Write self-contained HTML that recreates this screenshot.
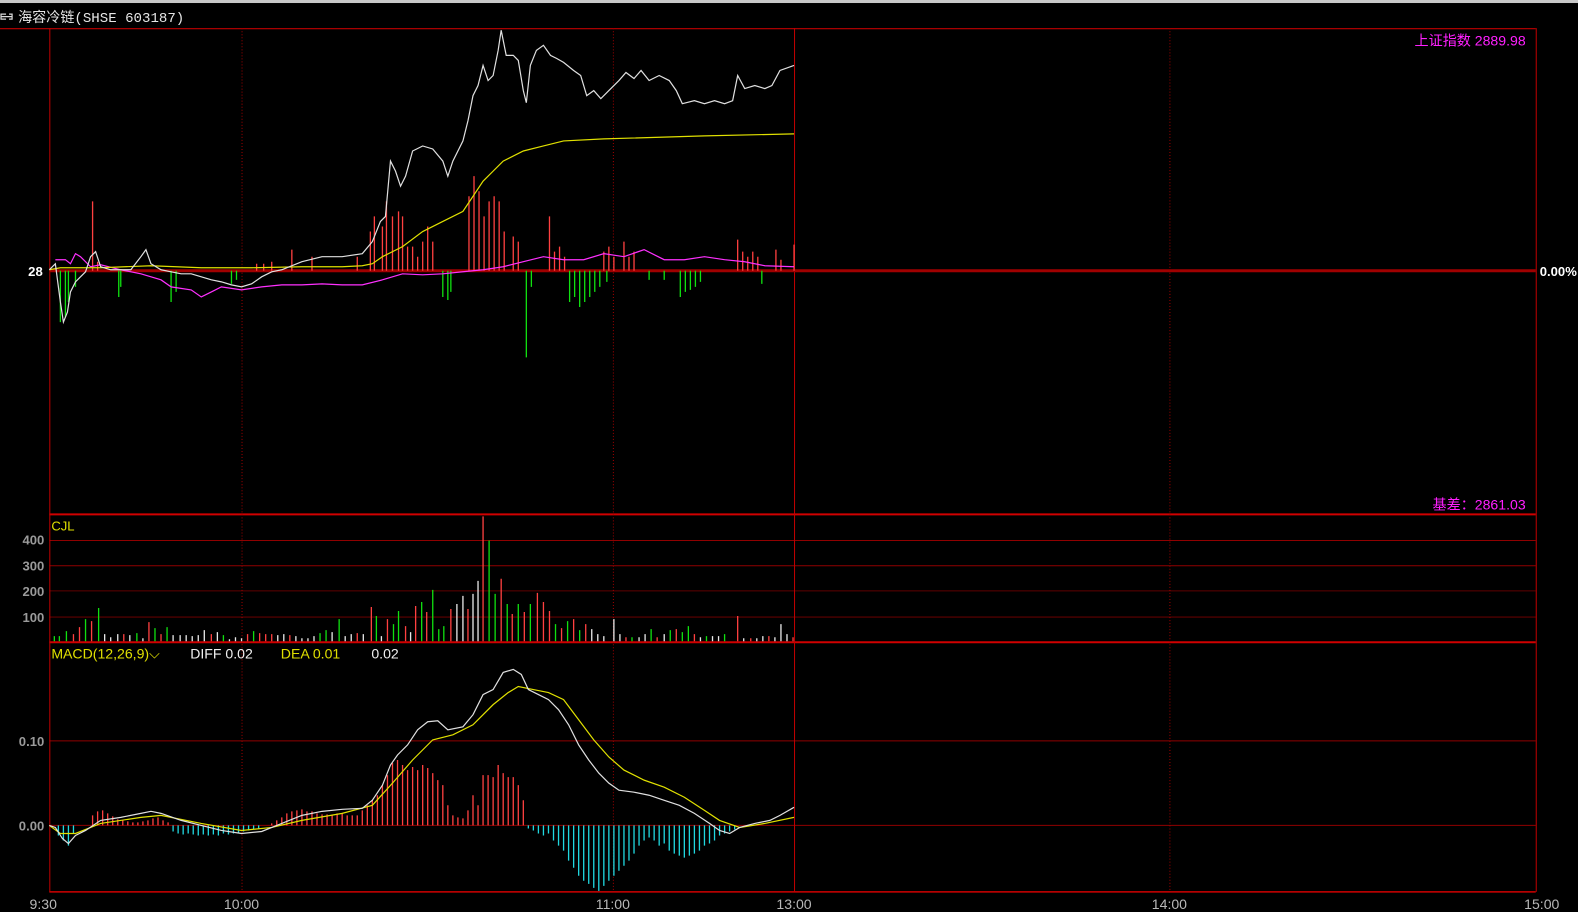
<!DOCTYPE html>
<html><head><meta charset="utf-8"><style>
html,body{margin:0;padding:0;background:#000;overflow:hidden}
svg{display:block}
text{font-family:"Liberation Sans","Noto Sans CJK SC",sans-serif}
</style></head><body>
<svg width="1578" height="912" viewBox="0 0 1568 906" preserveAspectRatio="none" xmlns="http://www.w3.org/2000/svg">
<rect width="1568" height="906" fill="#000"/>
<rect x="0" y="0" width="1568" height="3" fill="#c8c8c8"/>
<g stroke="#ddd" stroke-width="1.2" fill="none"><path d="M6 14H1V19H6M1 16.5H12M9 14H12V19H9"/></g>
<text x="18" y="22" fill="#e6e6e6" font-size="14" style="font-family:'Liberation Mono','Noto Sans CJK SC',monospace">海容冷链(SHSE 603187)</text>
<g stroke="#b00000" stroke-width="1" fill="none">
<line x1="0" y1="28.5" x2="1526" y2="28.5" stroke="#c00000"/>
<line x1="49" y1="511" x2="1526" y2="511" stroke="#d00000" stroke-width="2"/>
<line x1="49" y1="638" x2="1526" y2="638" stroke="#d00000" stroke-width="2"/>
<line x1="49" y1="886" x2="1526" y2="886" stroke="#d00000" stroke-width="1.5"/>
<line x1="49" y1="537" x2="1526" y2="537" stroke="#900000"/>
<line x1="49" y1="562" x2="1526" y2="562" stroke="#900000"/>
<line x1="49" y1="587" x2="1526" y2="587" stroke="#600000"/>
<line x1="49" y1="613" x2="1526" y2="613" stroke="#600000"/>
<line x1="49" y1="736" x2="1526" y2="736" stroke="#900000"/>
<line x1="49" y1="820" x2="1526" y2="820" stroke="#900000"/>
<line x1="49.5" y1="28" x2="49.5" y2="886" stroke="#c00000"/>
<line x1="789.5" y1="28" x2="789.5" y2="886" stroke="#c00000"/>
<line x1="1526.5" y1="28" x2="1526.5" y2="886" stroke="#c00000"/>
<line x1="240.5" y1="28" x2="240.5" y2="886" stroke="#a00000" stroke-dasharray="1,2"/>
<line x1="609.5" y1="28" x2="609.5" y2="886" stroke="#a00000" stroke-dasharray="1,2"/>
<line x1="1162.5" y1="28" x2="1162.5" y2="886" stroke="#a00000" stroke-dasharray="1,2"/>
</g>
<line x1="49" y1="269" x2="1526" y2="269" stroke="#a00000" stroke-width="3"/>
<g stroke="#ff4040" stroke-width="1.3">
<path d="M92 269V200M97 269V260M255 269V262M262 269V262M270 269V260M290 269V248M310 269V255M355 269V255M368 269V230M372 269V215M380 269V225M384 269V200M390 269V215M396 269V210M400 269V215M405 269V245M410 269V245M415 269V255M420 269V240M425 269V225M430 269V240M466 269V195M471 269V175M476 269V190M481 269V215M486 269V200M491 269V195M496 269V200M501 269V230M510 269V235M515 269V240M546 269V215M551 269V250M556 269V245M561 269V255M600 269V250M605 269V245M610 269V255M620 269V240M625 269V255M630 269V250M733 269V238M738 269V250M743 269V255M748 269V250M753 269V255M771 269V248M776 269V258M789 269V243"/>
</g>
<g stroke="#10e010" stroke-width="1.3">
<path d="M60 269V320M65 269V315M68 269V300M75 269V285M118 269V295M120 269V285M170 269V300M175 269V290M230 269V282M235 269V278M440 269V295M445 269V298M448 269V290M523 269V355M528 269V285M566 269V300M571 269V295M576 269V305M581 269V300M586 269V295M591 269V290M596 269V285M603 269V280M645 269V278M660 269V278M676 269V295M681 269V290M686 269V288M691 269V285M696 269V280M757 269V282"/>
</g>
<polyline fill="none" stroke="#ff30ff" stroke-width="1.2" points="55,258 65,258 70,262 75,252 80,255 90,265 100,263 120,268 140,272 160,278 170,285 190,288 200,295 210,290 220,285 240,288 260,285 280,283 300,283 320,282 340,283 360,283 380,278 400,272 420,273 440,272 460,270 480,268 500,265 520,260 540,255 560,258 580,258 600,252 620,255 640,248 660,258 680,258 700,255 720,258 740,260 760,264 789,265"/>
<polyline fill="none" stroke="#e0e000" stroke-width="1.2" points="49,268 60,266 80,266 100,266 150,264 200,266 250,266 300,265 340,265 360,264 370,262 380,255 400,245 420,230 440,220 460,210 470,195 480,180 490,170 500,160 520,150 540,145 560,140 600,138 700,135 789,133"/>
<polyline fill="none" stroke="#e0e0e0" stroke-width="1.2" points="49,268 55,262 60,300 63,320 67,310 70,290 75,280 80,275 85,270 90,255 95,250 100,265 110,268 120,268 130,268 140,255 145,248 150,262 160,268 170,270 180,272 190,272 200,275 210,278 220,280 230,283 240,285 250,282 260,275 270,270 280,268 300,260 320,255 340,255 360,252 370,240 378,220 383,215 388,160 393,170 398,185 403,175 410,150 420,145 430,148 440,160 445,175 450,160 460,140 465,120 470,95 475,85 480,65 485,80 490,75 495,50 498,30 503,55 510,55 515,60 520,90 523,102 527,65 533,50 540,45 547,55 553,58 560,62 570,70 577,75 583,95 590,90 597,98 605,90 615,80 622,72 630,78 637,70 645,80 655,75 665,80 672,90 678,103 690,100 700,103 710,100 720,103 728,100 733,75 740,88 750,85 760,88 767,85 775,70 789,65"/>
<text x="28" y="274" fill="#fff" font-size="13" font-weight="bold">28</text>
<text x="1530" y="274" fill="#fff" font-size="13" font-weight="bold">0.00%</text>
<text x="1516" y="45" fill="#ff20ff" font-size="14" text-anchor="end">上证指数  2889.98</text>
<text x="1516" y="506" fill="#ff20ff" font-size="14" text-anchor="end">基差：2861.03</text>
<text x="51" y="527" fill="#e0e000" font-size="13">CJL</text>
<g fill="#9a9a9a" font-size="13" font-weight="bold" text-anchor="end">
<text x="44" y="541">400</text><text x="44" y="567">300</text><text x="44" y="592">200</text><text x="44" y="618">100</text>
<text x="44" y="741">0.10</text><text x="44" y="825">0.00</text>
</g>
<g stroke-width="1.3">
<path stroke="#10e010" d="M54 637V632M59 637V632M66 637V627M85 637V615M98 637V604M136 637V629M154 637V624M166 637V623M222 637V631M252 637V627M318 637V629M324 637V626M337 637V615M374 637V612M391 637V620M396 637V607M419 637V598M430 637V586M436 637V625M441 637V622M486 637V537M492 637V590M504 637V600M515 637V600M527 637V600M552 637V620M564 637V617M576 637V626M628 637V633M647 637V625M666 637V626M678 637V628M684 637V622M702 637V632M720 637V630"/>
<path stroke="#ff4040" d="M73 637V630M79 637V623M91 637V617M123 637V630M148 637V618M160 637V630M210 637V630M246 637V630M258 637V629M264 637V630M270 637V630M288 637V631M355 637V629M369 637V603M385 637V615M403 637V622M413 637V602M424 637V608M448 637V605M465 637V605M480 637V513M498 637V575M509 637V610M521 637V608M534 637V589M540 637V598M546 637V607M558 637V624M570 637V615M582 637V620M622 637V633M653 637V633M672 637V625M690 637V630M733 637V612M746 637V634M764 637V632M788 637V633"/>
<path stroke="#e8e8e8" d="M104 637V630M110 637V633M117 637V630M129 637V631M142 637V634M172 637V631M179 637V631M185 637V631M191 637V632M197 637V631M203 637V626M216 637V628M228 637V635M234 637V633M240 637V634M276 637V631M282 637V630M294 637V632M300 637V634M306 637V634M312 637V632M330 637V628M343 637V632M349 637V630M361 637V630M379 637V632M408 637V628M454 637V600M460 637V592M470 637V590M475 637V577M588 637V625M594 637V630M600 637V632M610 637V615M616 637V630M635 637V633M641 637V630M660 637V630M696 637V633M708 637V632M714 637V632M739 637V634M752 637V634M758 637V632M770 637V633M776 637V620M782 637V630"/>
</g>
<text x="51" y="654" fill="#e0e000" font-size="14">MACD(12,26,9)⌵</text>
<text x="189" y="654" fill="#f0f0f0" font-size="14">DIFF 0.02</text>
<text x="279" y="654" fill="#e0e000" font-size="14">DEA 0.01</text>
<text x="369" y="654" fill="#f0f0f0" font-size="14">0.02</text>
<g stroke-width="1.3">
<path stroke="#ff4040" d="M92 820V810M97 820V806M102 820V805M107 820V808M112 820V811M117 820V814M122 820V815M127 820V816M132 820V817M137 820V817M142 820V816M147 820V815M152 820V813M157 820V812M162 820V815M167 820V817M270 820V818M275 820V815M280 820V812M285 820V808M290 820V806M295 820V805M300 820V804M305 820V806M310 820V806M315 820V808M320 820V809M325 820V809M330 820V810M335 820V808M340 820V808M345 820V810M350 820V810M355 820V810M360 820V805M365 820V800M370 820V795M375 820V790M380 820V780M385 820V770M390 820V758M395 820V755M400 820V760M405 820V765M410 820V762M415 820V765M420 820V760M425 820V763M430 820V768M435 820V775M440 820V780M445 820V800M450 820V810M455 820V812M460 820V813M465 820V805M470 820V790M475 820V800M480 820V770M485 820V770M490 820V772M495 820V760M500 820V768M505 820V772M510 820V772M515 820V780M520 820V795"/>
<path stroke="#20d8e0" d="M58 820V830M63 820V835M68 820V840M73 820V828M172 820V826M177 820V828M182 820V829M187 820V828M192 820V829M197 820V830M202 820V829M207 820V830M212 820V829M217 820V830M222 820V828M227 820V829M232 820V828M237 820V827M242 820V826M247 820V825M252 820V824M257 820V823M525 820V823M530 820V825M535 820V828M540 820V830M545 820V828M550 820V835M555 820V840M560 820V845M565 820V855M570 820V862M575 820V870M580 820V875M585 820V878M590 820V882M595 820V885M600 820V880M605 820V875M610 820V870M615 820V865M620 820V860M625 820V855M630 820V848M635 820V840M640 820V835M645 820V832M650 820V835M655 820V840M660 820V838M665 820V845M670 820V848M675 820V850M680 820V852M685 820V850M690 820V848M695 820V845M700 820V840M705 820V838M710 820V835M715 820V830M720 820V828M725 820V826M730 820V824"/>
</g>
<polyline fill="none" stroke="#e0e000" stroke-width="1.2" points="49,820 60,828 75,828 100,818 140,812 160,810 200,818 240,825 270,822 300,815 340,808 370,800 390,778 410,755 430,735 450,730 470,720 490,700 505,688 515,682 530,685 545,688 560,695 575,715 590,735 605,752 620,765 640,775 660,782 680,792 700,805 715,815 735,822 760,818 789,812"/>
<polyline fill="none" stroke="#e0e0e0" stroke-width="1.2" points="49,820 55,822 62,833 68,838 75,830 85,825 100,815 120,812 140,808 150,806 160,808 180,815 200,820 220,825 240,828 260,826 280,818 300,810 320,806 340,804 360,803 370,795 380,780 388,760 395,750 405,740 415,725 425,717 435,716 445,725 460,722 470,710 480,690 490,685 500,668 510,665 518,670 525,685 535,690 545,695 555,705 565,720 575,740 585,755 595,768 605,778 615,785 630,787 645,790 660,795 675,800 690,808 705,818 715,825 725,828 735,822 750,818 765,815 775,810 789,802"/>
<g fill="#b8b8b8" font-size="14" text-anchor="middle">
<text x="43" y="903">9:30</text><text x="240" y="903">10:00</text><text x="609" y="903">11:00</text><text x="789" y="903">13:00</text><text x="1162" y="903">14:00</text><text x="1532" y="903">15:00</text>
</g>
</svg>
</body></html>
